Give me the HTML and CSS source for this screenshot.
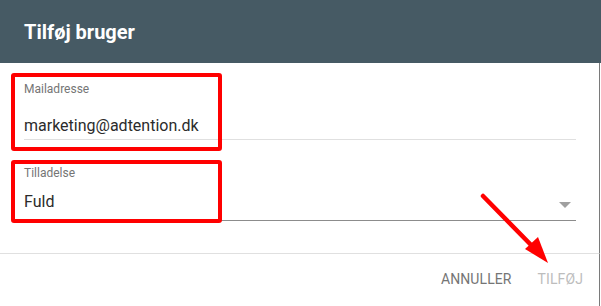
FILE: index.html
```html
<!DOCTYPE html>
<html lang="da">
<head>
    <meta charset="UTF-8">
    <title>Tilføj bruger</title>
    <link rel="stylesheet" href="styles.css">
</head>
<body>
    <div class="dialog">
        <div class="dialog-header">
            <h1 class="dialog-title">Tilføj bruger</h1>
        </div>

        <div class="dialog-content">
            <div class="field field-mail">
                <label class="field-label">Mailadresse</label>
                <div class="field-input">marketing@adtention.dk</div>
            </div>

            <div class="field field-select">
                <label class="field-label">Tilladelse</label>
                <div class="field-input select">
                    <span>Fuld</span>
                    <span class="caret"></span>
                </div>
            </div>
        </div>

        <div class="dialog-actions">
            <button class="btn">Annuller</button>
            <button class="btn disabled">Tilføj</button>
        </div>
    </div>

    <!-- annotations -->
    <div class="mark mark-mail"></div>
    <div class="mark mark-select"></div>
    <svg class="arrow" width="601" height="306" viewBox="0 0 601 306">
        <line x1="483" y1="196" x2="536" y2="250" stroke="#ff0000" stroke-width="4.5" stroke-linecap="round"/>
        <polygon points="548,263 525,249 538,237" fill="#ff0000"/>
    </svg>
</body>
</html>
```

FILE: styles.css
```css
* {
    margin: 0;
    padding: 0;
    box-sizing: border-box;
}

body {
    font-family: Roboto, 'Liberation Sans', sans-serif;
    background: #ffffff;
    width: 601px;
    height: 306px;
    overflow: hidden;
    position: relative;
}

.dialog {
    width: 600px;
    height: 306px;
    display: flex;
    flex-direction: column;
}

.dialog-header {
    height: 63px;
    background: #465a64;
    display: flex;
    align-items: center;
    padding-left: 24px;
    width: 601px;
}

.dialog-title {
    font-size: 20px;
    line-height: 24px;
    font-weight: 700;
    color: #ffffff;
}

.dialog-content {
    padding: 18px 23px 0 24px;
    height: 190px;
    border-right: 1px solid #7a7a7a;
}

.field-label {
    display: block;
    font-size: 12px;
    line-height: 16px;
    color: #757575;
}

.field-input {
    font-size: 16px;
    line-height: 24px;
    color: #2b2b2b;
}

.field-mail .field-input {
    margin-top: 17px;
    padding-bottom: 1px;
    border-bottom: 1px solid #e0e0e0;
}

.field-select {
    margin-top: 25px;
}

.field-select .field-input {
    margin-top: 9px;
    padding-bottom: 6px;
    border-bottom: 1px solid #8c8c8c;
}

.select {
    display: flex;
    align-items: center;
    justify-content: space-between;
}

.caret {
    width: 0;
    height: 0;
    margin-right: 5px;
    margin-top: 6px;
    border-left: 6px solid transparent;
    border-right: 6px solid transparent;
    border-top: 6px solid #a0a0a0;
}

.dialog-actions {
    flex: 1;
    border-top: 1px solid #e0e0e0;
    border-right: 1px solid #7a7a7a;
    display: flex;
    justify-content: flex-end;
    align-items: flex-start;
    padding: 13px 8px 0 0;
    gap: 10px;
}

.btn {
    font-family: Roboto, 'Liberation Sans', sans-serif;
    background: none;
    border: none;
    font-size: 14px;
    line-height: 24px;
    font-weight: 400;
    letter-spacing: 0.1px;
    text-transform: uppercase;
    color: #757575;
    padding: 0 8px;
}

.btn.disabled {
    color: #bdbdbd;
}

/* red annotation boxes */
.mark {
    position: absolute;
    left: 11px;
    width: 211px;
    border: 4px solid #ff0000;
    border-radius: 3px;
}

.mark-mail {
    top: 73px;
    height: 78px;
}

.mark-select {
    top: 160px;
    height: 63px;
}

.arrow {
    position: absolute;
    left: 0;
    top: 0;
}
```
